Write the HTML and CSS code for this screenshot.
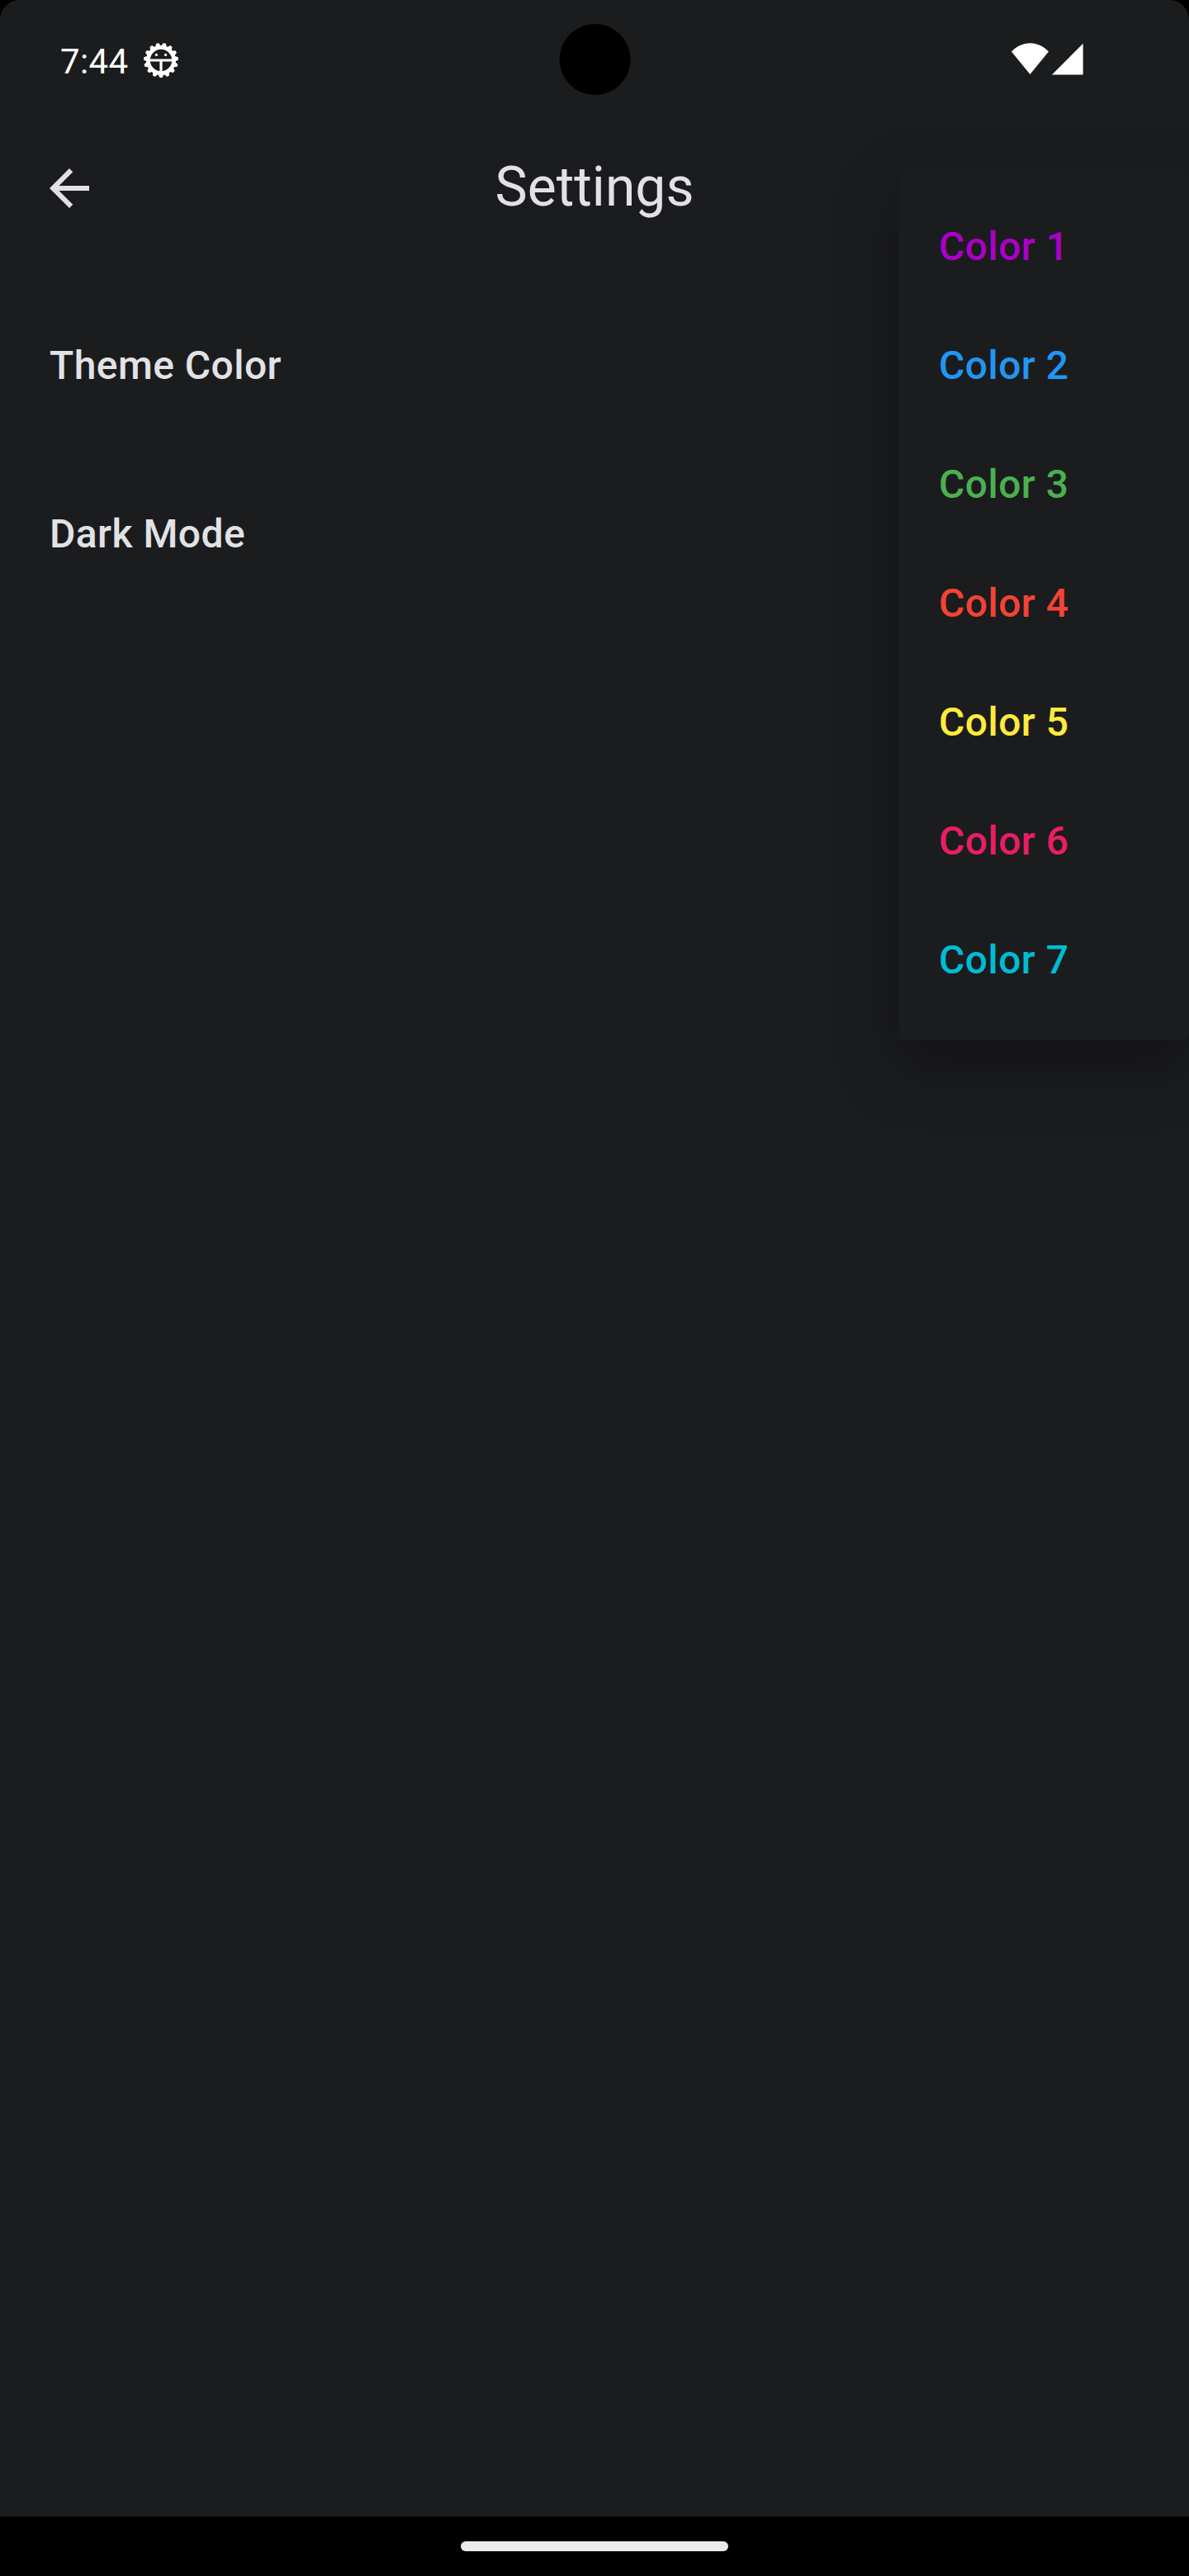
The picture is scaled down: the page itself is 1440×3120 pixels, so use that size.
FILE: index.html
```html
<!DOCTYPE html>
<html lang="en">
<head>
<meta charset="utf-8">
<title>Settings</title>
<link rel="stylesheet" href="styles.css">
</head>
<body>
<div class="device">
  <div class="screen">
    <header class="status-bar">
      <div class="status-left">
        <span class="clock">7:44</span>
        <svg class="debug-icon" viewBox="-22 -22 44 44">
          <circle r="15.6" fill="none" stroke="#fff" stroke-width="4.8"/>
          <g fill="#fff" stroke="#fff" stroke-width="1.6" stroke-linejoin="round">
            <path d="M-2.6 16.5L-1.1 20.2H1.1L2.6 16.5Z"/>
            <path d="M-2.6 16.5L-1.1 20.2H1.1L2.6 16.5Z" transform="rotate(24)"/>
            <path d="M-2.6 16.5L-1.1 20.2H1.1L2.6 16.5Z" transform="rotate(48)"/>
            <path d="M-2.6 16.5L-1.1 20.2H1.1L2.6 16.5Z" transform="rotate(72)"/>
            <path d="M-2.6 16.5L-1.1 20.2H1.1L2.6 16.5Z" transform="rotate(96)"/>
            <path d="M-2.6 16.5L-1.1 20.2H1.1L2.6 16.5Z" transform="rotate(120)"/>
            <path d="M-2.6 16.5L-1.1 20.2H1.1L2.6 16.5Z" transform="rotate(144)"/>
            <path d="M-2.6 16.5L-1.1 20.2H1.1L2.6 16.5Z" transform="rotate(168)"/>
            <path d="M-2.6 16.5L-1.1 20.2H1.1L2.6 16.5Z" transform="rotate(192)"/>
            <path d="M-2.6 16.5L-1.1 20.2H1.1L2.6 16.5Z" transform="rotate(216)"/>
            <path d="M-2.6 16.5L-1.1 20.2H1.1L2.6 16.5Z" transform="rotate(240)"/>
            <path d="M-2.6 16.5L-1.1 20.2H1.1L2.6 16.5Z" transform="rotate(264)"/>
            <path d="M-2.6 16.5L-1.1 20.2H1.1L2.6 16.5Z" transform="rotate(288)"/>
            <path d="M-2.6 16.5L-1.1 20.2H1.1L2.6 16.5Z" transform="rotate(312)"/>
            <path d="M-2.6 16.5L-1.1 20.2H1.1L2.6 16.5Z" transform="rotate(336)"/>
          </g>
          <path d="M-15 0H15M0 0V15" stroke="#fff" stroke-width="3.2"/>
          <circle cx="-5.6" cy="-6.6" r="1.6" fill="#fff"/>
          <circle cx="5.6" cy="-6.6" r="1.6" fill="#fff"/>
        </svg>
      </div>
      <div class="camera"></div>
      <svg class="signal-icons" viewBox="0 0 87 39">
        <path d="M22.5 38L0 10.5C6 4.5 13.5.3 22.5.3S39 4.5 45 10.5Z" fill="#fff"/>
        <path d="M49 38.5L86.7.7V38.5Z" fill="#fff"/>
      </svg>
    </header>
    <nav class="app-bar">
      <svg class="back-icon" viewBox="0 0 24 24"><path d="M20 11H7.83l5.59-5.59L12 4l-8 8 8 8 1.41-1.41L7.83 13H20v-2z" fill="#e2e2e6"/></svg>
      <h1 class="title">Settings</h1>
    </nav>
    <main class="settings">
      <div class="setting">Theme Color</div>
      <div class="setting">Dark Mode</div>
    </main>
    <ul class="menu">
      <li class="option purple">Color 1</li>
      <li class="option blue">Color 2</li>
      <li class="option green">Color 3</li>
      <li class="option red">Color 4</li>
      <li class="option yellow">Color 5</li>
      <li class="option pink">Color 6</li>
      <li class="option cyan">Color 7</li>
    </ul>
  </div>
  <footer class="nav-bar"><div class="handle"></div></footer>
</div>
</body>
</html>
```
FILE: styles.css
```css
* { box-sizing: border-box; }
body { margin: 0; background: #000; font-family: Roboto, sans-serif; }
.device { display: flex; flex-direction: column; width: 1440px; height: 3120px; overflow: hidden; background: #000; }
.screen { position: relative; flex: 1; overflow: hidden; background: #1b1c1e; border-radius: 24px 24px 0 0; }
.status-bar { display: grid; grid-template-columns: 1fr 86px 1fr; align-items: center; height: 144px; padding: 0 128px 0 73px; }
.status-left { display: flex; align-items: center; gap: 17px; }
.clock { color: #fff; font-size: 42px; line-height: 48px; padding-top: 5px; letter-spacing: .4px; }
.debug-icon { width: 44px; height: 44px; margin-top: 2px; }
.camera { width: 86px; height: 86px; border-radius: 50%; background: #000; transform: translateX(27.5px); }
.signal-icons { width: 87px; height: 39px; margin-bottom: 1px; justify-self: end; }
.app-bar { display: grid; grid-template-columns: 72px 1fr 72px; align-items: center; height: 168px; padding: 0 48px; }
.back-icon { width: 72px; height: 72px; }
.title { margin: 0; padding-bottom: 3px; text-align: center; color: #e2e2e6; font-size: 66px; font-weight: 400; line-height: 84px; }
.settings { display: flex; flex-direction: column; padding: 30px 60px; }
.setting { height: 204px; line-height: 201px; color: #e2e2e6; font-size: 48px; font-weight: 500; letter-spacing: .45px; }
.menu { position: absolute; top: 204px; right: 0; width: 351px; margin: 0; padding: 24px 0; list-style: none; background: #1b1c1e; border-radius: 6px; box-shadow: 0 30px 74px rgba(0, 0, 0, .34); }
.option { height: 144px; padding-left: 48px; line-height: 141px; font-size: 48px; font-weight: 500; letter-spacing: .45px; }
.purple { color: #aa00c7; }
.blue { color: #2196f3; }
.green { color: #4caf50; }
.red { color: #f44336; }
.yellow { color: #ffeb3b; }
.pink { color: #e91e63; }
.cyan { color: #00bcd4; }
.nav-bar { display: flex; justify-content: center; align-items: center; height: 72px; }
.handle { width: 324px; height: 12px; border-radius: 6px; background: #ebebeb; }
```
